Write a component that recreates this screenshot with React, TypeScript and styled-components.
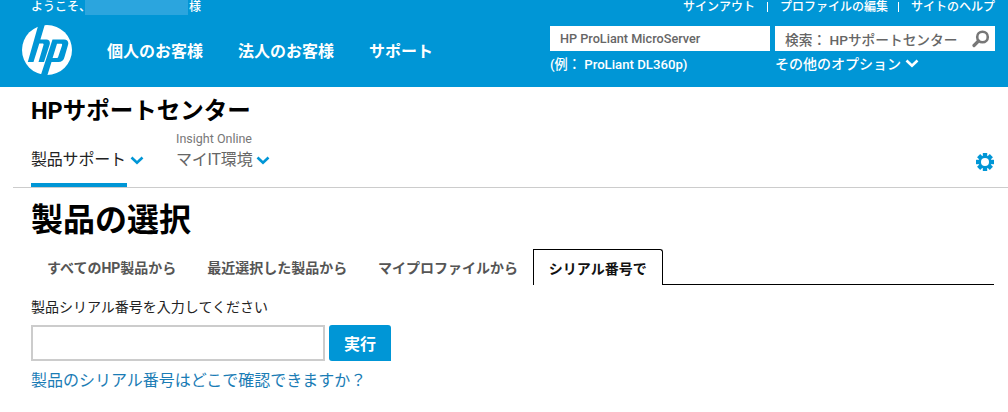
import * as React from 'react'
import styled, { createGlobalStyle } from 'styled-components'

const Global = createGlobalStyle`
  html, body {
    margin: 0;
    padding: 0;
    background: #fff;
    font-family: "Roboto", "Noto Sans CJK JP", sans-serif;
  }
  * {
    box-sizing: border-box;
  }
  svg {
    flex-shrink: 0;
  }
`

const Page = styled.div`
  width: 1008px;
  height: 412px;
  overflow: hidden;
`

const Header = styled.header`
  height: 87px;
  background: #0096d6;
  color: #fff;
  padding: 0 13px 0 22px;
`

const TopBar = styled.div`
  height: 14px;
  display: flex;
  align-items: center;
  justify-content: space-between;
  padding-left: 9px;
  font-size: 12px;
  font-weight: 500;
  line-height: 14px;
`

const Welcome = styled.div`
  display: flex;
  align-items: center;
`

const Masked = styled.span`
  width: 103px;
  height: 16px;
  margin: 0 1px 0 -6px;
  background: #2ba5de;
`

const TopLinks = styled.div`
  display: flex;
  align-items: center;
`

const TopLink = styled.a`
  color: #fff;
`

const Divider = styled.span<{ $left: number; $right: number }>`
  width: 1px;
  height: 10px;
  margin: 0 ${(p) => p.$right}px 0 ${(p) => p.$left}px;
  background: #fff;
`

const MainBar = styled.div`
  display: flex;
  margin-top: 11px;
`

const Nav = styled.nav`
  display: flex;
  gap: 35px;
  margin-left: 35px;
  height: 50px;
  align-items: center;
`

const NavItem = styled.a`
  font-size: 16px;
  font-weight: 700;
  color: #fff;
`

const SearchArea = styled.div`
  display: grid;
  grid-template-columns: 220px 220px;
  grid-template-rows: 25px 24px;
  column-gap: 5px;
  margin-left: auto;
  margin-top: 1px;
`

const SearchBox = styled.div<{ $size: number }>`
  height: 25px;
  background: #fff;
  color: #666;
  display: flex;
  align-items: center;
  justify-content: space-between;
  padding: 0 5px 0 10px;
  font-size: ${(p) => p.$size}px;
  font-weight: 500;
  white-space: nowrap;
`

const Hint = styled.div<{ $size: number }>`
  display: flex;
  align-items: center;
  gap: 4px;
  font-size: ${(p) => p.$size}px;
  font-weight: 500;
`

const SubHeader = styled.section`
  margin-left: 13px;
  height: 101px;
  border-bottom: 1px solid #ccc;
  padding: 11px 13px 0 18px;
`

const SiteTitle = styled.h2`
  margin: 0;
  height: 26px;
  font-size: 23.5px;
  line-height: 26px;
  font-weight: 700;
  color: #000;
`

const SiteNav = styled.div`
  display: flex;
  align-items: flex-end;
  height: 63px;
`

const SiteTab = styled.div<{ $active?: boolean }>`
  width: ${(p) => (p.$active ? '96px' : 'auto')};
  margin-right: ${(p) => (p.$active ? '49px' : '0')};
  height: 54px;
  padding-bottom: 13px;
  display: flex;
  flex-direction: column;
  justify-content: flex-end;
  border-bottom: 4px solid ${(p) => (p.$active ? '#0096d6' : 'transparent')};
  color: ${(p) => (p.$active ? '#222' : '#666')};
`

const SiteTabSmall = styled.div`
  font-size: 12.5px;
  line-height: 14px;
  color: #777;
  margin-bottom: 4px;
`

const SiteTabLabel = styled.div`
  display: flex;
  align-items: center;
  gap: 4px;
  font-size: 16px;
  line-height: 20px;
  letter-spacing: -0.2px;
  white-space: nowrap;
`

const GearWrap = styled.div`
  display: flex;
  margin-left: auto;
  padding: 0 1px 16px 0;
`

const Content = styled.main`
  padding: 12px 14px 0 31px;
`

const PageTitle = styled.h1`
  margin: 0;
  height: 48px;
  font-size: 32px;
  line-height: 40px;
  font-weight: 700;
  color: #000;
`

const Tabs = styled.div`
  display: flex;
  height: 36px;
  margin-top: 1px;
  border-bottom: 1px solid #000;
`

const Tab = styled.div<{ $active?: boolean }>`
  height: 36px;
  padding: ${(p) => (p.$active ? '0 15px' : '0 14.8px 0 16px')};
  display: flex;
  align-items: center;
  font-size: 14px;
  font-weight: 700;
  color: ${(p) => (p.$active ? '#111' : '#555')};
  background: #fff;
  ${(p) =>
    p.$active
      ? `border: 1px solid #000; border-bottom: 0; border-top-right-radius: 3px;`
      : ''}
`

const FieldLabel = styled.div`
  margin-top: 13px;
  height: 18px;
  font-size: 14px;
  line-height: 18px;
  color: #222;
`

const FormRow = styled.div`
  display: flex;
  gap: 4px;
  margin-top: 9px;
`

const SerialInput = styled.input`
  width: 294px;
  height: 36px;
  border: 2px solid #ccc;
  background: #fff;
  outline: none;
`

const GoButton = styled.button`
  width: 62px;
  height: 36px;
  border: 0;
  border-radius: 3px 3px 0 3px;
  background: #0096d6;
  color: #fff;
  font-family: inherit;
  font-size: 16px;
  font-weight: 700;
`

const HelpLink = styled.a`
  display: block;
  margin-top: 10px;
  font-size: 16px;
  line-height: 20px;
  color: #1a7cb5;
`

function Chevron({ color }: { color: string }) {
  return (
    <svg width="14" height="9" viewBox="0 0 14 9">
      <path d="M1.5 1.5 7 6.8 12.5 1.5" fill="none" stroke={color} strokeWidth="2.6" />
    </svg>
  )
}

function HpLogo() {
  return (
    <svg width="50" height="50" viewBox="0 0 50 50">
      <circle cx="25" cy="25" r="25" fill="#fff" />
      <path
        fill="#0096d6"
        fillRule="evenodd"
        d="M16.3 0H22.7L18.4 14.5H24.5C27.5 14.5 28.5 17 27.5 20L22 37H16.5L21.5 20C21.8 19 21.3 18.5 20.5 18.5H17.3L11.5 37H5.8ZM30.5 14.5H42C45.5 14.5 47 17 46 20L42.5 32C41.8 35.5 39.5 37 36.5 37H29.5L25.3 50.5H18.7ZM35 18.7 30.6 33H34.5C35.5 33 36 32.5 36.3 31.5L40 20.5C40.3 19.5 40 18.7 39 18.7Z"
      />
    </svg>
  )
}

function SearchIcon() {
  return (
    <svg width="18" height="18" viewBox="0 0 18 18">
      <circle cx="10.5" cy="7" r="5.3" fill="none" stroke="#777" strokeWidth="2.6" />
      <path d="M6.5 11 2 15.5" stroke="#777" strokeWidth="3.2" strokeLinecap="round" />
    </svg>
  )
}

function Gear() {
  const teeth = [0, 45, 90, 135]
  return (
    <svg width="18" height="18" viewBox="0 0 18 18">
      {teeth.map((a) => (
        <rect key={a} x="6.8" y="0" width="4.4" height="18" fill="#0096d6" transform={`rotate(${a} 9 9)`} />
      ))}
      <circle cx="9" cy="9" r="6.5" fill="#0096d6" />
      <circle cx="9" cy="9" r="4" fill="#fff" />
    </svg>
  )
}

export default function App(): JSX.Element {
  return (
    <Page>
      <Global />
      <Header>
        <TopBar>
          <Welcome>
            ようこそ、<Masked />様
          </Welcome>
          <TopLinks>
            <TopLink>サインアウト</TopLink>
            <Divider $left={12} $right={12} />
            <TopLink>プロファイルの編集</TopLink>
            <Divider $left={10} $right={12} />
            <TopLink>サイトのヘルプ</TopLink>
          </TopLinks>
        </TopBar>
        <MainBar>
          <HpLogo />
          <Nav>
            <NavItem>個人のお客様</NavItem>
            <NavItem>法人のお客様</NavItem>
            <NavItem>サポート</NavItem>
          </Nav>
          <SearchArea>
            <SearchBox $size={12.7}>HP ProLiant MicroServer</SearchBox>
            <SearchBox $size={13.7}>
              検索： HPサポートセンター
              <SearchIcon />
            </SearchBox>
            <Hint $size={13.2}>(例： ProLiant DL360p)</Hint>
            <Hint $size={14}>
              その他のオプション
              <Chevron color="#fff" />
            </Hint>
          </SearchArea>
        </MainBar>
      </Header>
      <SubHeader>
        <SiteTitle>HPサポートセンター</SiteTitle>
        <SiteNav>
          <SiteTab $active>
            <SiteTabLabel>
              製品サポート
              <Chevron color="#0096d6" />
            </SiteTabLabel>
          </SiteTab>
          <SiteTab>
            <SiteTabSmall>Insight Online</SiteTabSmall>
            <SiteTabLabel>
              マイIT環境
              <Chevron color="#0096d6" />
            </SiteTabLabel>
          </SiteTab>
          <GearWrap>
            <Gear />
          </GearWrap>
        </SiteNav>
      </SubHeader>
      <Content>
        <PageTitle>製品の選択</PageTitle>
        <Tabs>
          <Tab>すべてのHP製品から</Tab>
          <Tab>最近選択した製品から</Tab>
          <Tab>マイプロファイルから</Tab>
          <Tab $active>シリアル番号で</Tab>
        </Tabs>
        <FieldLabel>製品シリアル番号を入力してください</FieldLabel>
        <FormRow>
          <SerialInput />
          <GoButton>実行</GoButton>
        </FormRow>
        <HelpLink>製品のシリアル番号はどこで確認できますか？</HelpLink>
      </Content>
    </Page>
  )
}
